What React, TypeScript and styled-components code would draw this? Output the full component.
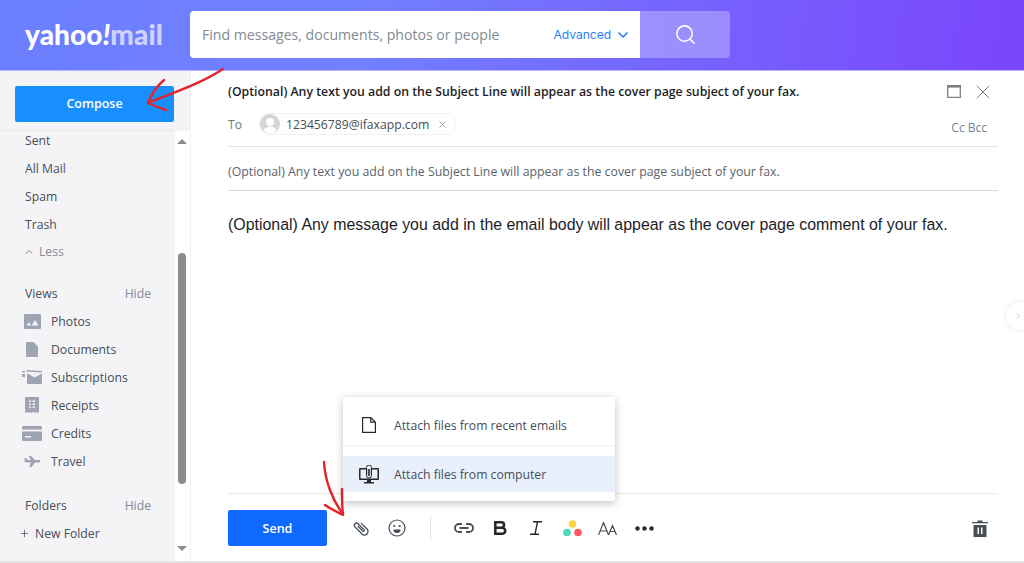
import React from 'react';
import styled, {createGlobalStyle} from 'styled-components';
import {ChevronDown, ChevronUp, Plus, Search, X} from 'lucide-react';

const GlobalStyle = createGlobalStyle`
  html, body {
    margin: 0;
    padding: 0;
    height: 100%;
    overflow: hidden;
    background: #fff;
    font-family: "Open Sans", "Noto Sans", sans-serif;
  }
`;

const StyledPage = styled.div`
  position: relative;
  width: 1024px;
  height: 563px;
  display: flex;
  flex-direction: column;
  overflow: hidden;
`;

const StyledHeader = styled.header`
  height: 71px;
  flex: none;
  display: flex;
  align-items: flex-start;
  padding-top: 11px;
  box-sizing: border-box;
  background: linear-gradient(95deg, #6b7fff 0%, #7280ff 35%, #7a45fb 100%);
  border-bottom: 1px solid #bdb4fb;
`;

const StyledLogo = styled.div`
  width: 190px;
  box-sizing: border-box;
  padding: 8px 0 0 25px;
  font-family: "Lato", sans-serif;
  font-weight: 900;
  font-size: 28px;
  letter-spacing: 0.1px;
  line-height: 30px;
  color: #fff;
  white-space: nowrap;

  span {
    color: #d0d3ff;
  }
`;

const StyledSearch = styled.div`
  width: 450px;
  height: 47px;
  box-sizing: border-box;
  display: flex;
  align-items: center;
  padding: 0 9px 0 12px;
  background: #fff;
  border-radius: 4px 0 0 4px;
`;

const StyledPlaceholder = styled.div`
  flex: 1;
  font-size: 14.1px;
  color: #828a93;
`;

const StyledAdvanced = styled.div`
  display: flex;
  align-items: center;
  gap: 4px;
  font-family: "Inter", sans-serif;
  font-size: 12.2px;
  letter-spacing: -0.1px;
  color: #2f7ffb;
`;

const StyledSearchButton = styled.div`
  width: 90px;
  height: 47px;
  display: flex;
  align-items: center;
  justify-content: center;
  background: rgba(255, 255, 255, 0.28);
  border-radius: 0 4px 4px 0;
  color: #fff;
`;

const StyledBody = styled.div`
  flex: 1;
  min-height: 0;
  display: flex;
  border-bottom: 2px solid #e4e4e7;
`;

const StyledSidebar = styled.aside`
  width: 191px;
  flex: none;
  display: flex;
  flex-direction: column;
  background: #f4f4f7;
  border-right: 1px solid #f0f0f2;
  box-sizing: border-box;
`;

const StyledComposeArea = styled.div`
  height: 59px;
  flex: none;
  box-sizing: border-box;
  padding: 15px 16px 0 15px;
  border-bottom: 1px solid #ececef;
  box-shadow: 0 1px 2px rgba(0, 0, 0, 0.04);
  position: relative;
  z-index: 1;
  background: #f4f4f7;
`;

const StyledCompose = styled.div`
  height: 36px;
  box-sizing: border-box;
  padding-bottom: 2px;
  display: flex;
  align-items: center;
  justify-content: center;
  background: #188fff;
  border-radius: 2px;
  color: #fff;
  font-size: 12.5px;
  font-weight: 600;
`;

const StyledSideScroll = styled.div`
  flex: 1;
  min-height: 0;
  display: flex;
`;

const StyledNav = styled.nav`
  flex: 1;
  margin-top: -4px;
  color: #464e56;
  font-size: 12.2px;
`;

const StyledNavRow = styled.div<{$height?: number; $before?: number; $after?: number; $muted?: boolean}>`
  height: ${p => p.$height ?? 28}px;
  margin-top: ${p => p.$before ?? 0}px;
  margin-bottom: ${p => p.$after ?? 0}px;
  padding: 0 24px 0 25px;
  display: flex;
  align-items: center;
  justify-content: space-between;
  color: ${p => (p.$muted ? '#828a93' : 'inherit')};
`;

const StyledHide = styled.span`
  color: #828a93;
`;

const StyledIconRow = styled.div`
  height: 28px;
  display: flex;
  align-items: center;
  padding-left: 22px;
`;

const StyledNavIcon = styled.span`
  width: 20px;
  margin-right: 9px;
  display: flex;
  justify-content: center;
  color: #9ea4b1;
`;

const StyledLess = styled.span`
  display: flex;
  align-items: center;
  gap: 4px;
  margin-left: -2px;
`;

const StyledNewFolder = styled.div`
  height: 28px;
  display: flex;
  align-items: center;
  gap: 5px;
  padding-left: 19px;
`;

const StyledScrollTrack = styled.div`
  width: 15px;
  flex: none;
  position: relative;
  background: #fff;
`;

const StyledArrow = styled.div<{$down?: boolean}>`
  position: absolute;
  left: 2px;
  ${p => (p.$down ? 'bottom: 10px;' : 'top: 9px;')}
  width: 0;
  height: 0;
  border-left: 5px solid transparent;
  border-right: 5px solid transparent;
  ${p => (p.$down ? 'border-top: 5px solid #8c8c8c;' : 'border-bottom: 5px solid #8c8c8c;')}
`;

const StyledThumb = styled.div`
  position: absolute;
  left: 3px;
  top: 123px;
  width: 8px;
  height: 231px;
  border-radius: 4px;
  background: #8c8c8c;
`;

const StyledMain = styled.main`
  flex: 1;
  min-width: 0;
  display: flex;
  flex-direction: column;
  box-sizing: border-box;
  padding: 0 26px 0 37px;
  color: #26282a;
`;

const StyledTitleRow = styled.div`
  height: 41px;
  flex: none;
  display: flex;
  align-items: center;
  justify-content: space-between;
`;

const StyledTitle = styled.div`
  font-size: 12.3px;
  font-weight: 600;
  color: #1d1d1f;
`;

const StyledWindowIcons = styled.div`
  display: flex;
  align-items: center;
  gap: 10px;
  margin-right: 3px;
  color: #7a8189;
`;

const StyledToRow = styled.div`
  height: 35px;
  flex: none;
  box-sizing: border-box;
  display: flex;
  align-items: center;
  border-bottom: 1px solid #e0e4e9;
  padding-bottom: 10px;
  font-size: 12.2px;
  color: #6e7680;
`;

const StyledToLabel = styled.span`
  width: 31px;
`;

const StyledChip = styled.div`
  height: 22px;
  display: flex;
  align-items: center;
  box-sizing: border-box;
  border: 1px solid #f0f0f3;
  border-radius: 11px;
  padding-right: 7px;
  color: #464e56;
  font-size: 12.2px;
`;

const StyledAvatar = styled.span`
  width: 20px;
  height: 20px;
  margin-right: 6px;
  display: flex;
`;

const StyledChipClose = styled.span`
  margin-left: 8px;
  display: flex;
  color: #979ea8;
`;

const StyledCc = styled.span`
  margin-left: auto;
  margin-right: 11px;
  margin-top: 6px;
  color: #767e87;
  font-size: 12px;
  font-weight: 500;
`;

const StyledSubject = styled.div`
  height: 44px;
  flex: none;
  box-sizing: border-box;
  display: flex;
  align-items: center;
  padding-top: 6px;
  border-bottom: 1px solid #d8dade;
  font-size: 12.33px;
  color: #5b636a;
`;

const StyledMessage = styled.div`
  flex: 1;
  padding-top: 25px;
  font-family: "Liberation Sans", Arial, sans-serif;
  font-size: 15.92px;
  line-height: 18px;
  color: #1d1d1f;
`;

const StyledToolbar = styled.div`
  height: 68px;
  flex: none;
  box-sizing: border-box;
  display: flex;
  align-items: flex-start;
  padding: 16px 0 0 0;
  border-top: 1px solid #e8e9ec;
`;

const StyledSend = styled.div`
  width: 99px;
  height: 36px;
  display: flex;
  align-items: center;
  justify-content: center;
  margin-right: 16px;
  background: #0f69ff;
  border-radius: 2px;
  color: #fff;
  font-size: 12.5px;
  font-weight: 600;
`;

const StyledTool = styled.span`
  width: 36px;
  height: 36px;
  flex: none;
  display: flex;
  align-items: center;
  justify-content: center;
  color: #464e56;
`;

const StyledDivider = styled.span`
  width: 1px;
  height: 24px;
  margin: 6px 15px 0 15px;
  background: #e4e6ea;
`;

const StyledToolEnd = styled(StyledTool)`
  margin-left: auto;
  margin-right: 0;
`;

const StyledPopup = styled.div`
  position: absolute;
  left: 343px;
  top: 397px;
  width: 272px;
  height: 104px;
  background: #fff;
  border-radius: 2px;
  box-shadow: 0 2px 8px rgba(0, 0, 0, 0.25);
`;

const StyledPopupItem = styled.div<{$active?: boolean}>`
  height: ${p => (p.$active ? 36 : 49)}px;
  box-sizing: border-box;
  margin-top: ${p => (p.$active ? 10 : 0)}px;
  padding-top: ${p => (p.$active ? 0 : 8)}px;
  display: flex;
  align-items: center;
  background: ${p => (p.$active ? '#e9f0fb' : '#fff')};
  border-bottom: ${p => (p.$active ? 'none' : '1px solid #eeeff1')};
  font-size: 12.2px;
  color: #464e56;
`;

const StyledPopupIcon = styled.span`
  width: 51px;
  flex: none;
  display: flex;
  justify-content: center;
  color: #26282a;
`;

const StyledEdgeHandle = styled.div`
  position: absolute;
  right: -10px;
  top: 302px;
  width: 28px;
  height: 28px;
  display: flex;
  align-items: center;
  padding-left: 7px;
  box-sizing: border-box;
  border-radius: 50%;
  background: #fff;
  box-shadow: 0 0 5px rgba(0, 0, 0, 0.1);
  color: #c4c6ca;
`;

const StyledAnnotations = styled.svg`
  position: absolute;
  left: 0;
  top: 0;
  z-index: 2;
  pointer-events: none;
`;

const PhotosIcon = () => (
  <svg width="17" height="15" viewBox="0 0 17 15">
    <path fill="currentColor" fillRule="evenodd" d="M1 0h15a1 1 0 0 1 1 1v13a1 1 0 0 1-1 1H1a1 1 0 0 1-1-1V1a1 1 0 0 1 1-1zM2.500 11.500h4.500L5 8zM7.500 11.500h7L11 6z" />
  </svg>
);

const DocumentIcon = () => (
  <svg width="12" height="15" viewBox="0 0 12 15">
    <path fill="currentColor" d="M1 0h6.500L12 4.500V14a1 1 0 0 1-1 1H1a1 1 0 0 1-1-1V1a1 1 0 0 1 1-1z" />
  </svg>
);

const SubscriptionsIcon = () => (
  <svg width="20" height="14" viewBox="0 0 20 14">
    <path fill="currentColor" d="M0 1h3v1.500H0zM4.500 0 20 1v1.500L4.500 1.500zM0 4h3v3H0zM5 3l7.500 4.500L20 3.500V13a1 1 0 0 1-1 1H6a1 1 0 0 1-1-1z" />
  </svg>
);

const ReceiptIcon = () => (
  <svg width="14" height="16" viewBox="0 0 14 16">
    <path fill="currentColor" fillRule="evenodd" d="M1 0h12a1 1 0 0 1 1 1v14l-1.500 1-1.500-1-1.500 1L8 15l-1.500 1L5 15l-1.500 1L2 15l-2 1V1a1 1 0 0 1 1-1zM4 3.500v1.500h2V3.500zM7.500 3.500v1.500h2.500V3.500zM4 6.500V8h2V6.500zM7.500 6.500V8h2.500V6.500zM4 9.500V11h2V9.500zM7.500 9.500V11h2.500V9.500z" />
  </svg>
);

const CreditIcon = () => (
  <svg width="20" height="15" viewBox="0 0 20 15">
    <path fill="currentColor" fillRule="evenodd" d="M1 0h18a1 1 0 0 1 1 1v2.500H0V1a1 1 0 0 1 1-1zM0 5.500h20V14a1 1 0 0 1-1 1H1a1 1 0 0 1-1-1zM3 10v1.500h6V10z" />
  </svg>
);

const PlaneIcon = () => (
  <svg width="17" height="11" viewBox="0 0 17 11">
    <path fill="currentColor" d="M0 2.500 2 2l1.500 2H7L4.500 0H7l4 4h4.500a1.500 1.500 0 0 1 0 2.500H11L7.500 11H5l2-4.500H3L0 5.500l1-1.500z" />
  </svg>
);

const MaximizeIcon = () => (
  <svg width="14" height="13" viewBox="0 0 14 13">
    <path fill="none" stroke="currentColor" strokeWidth="1.300" d="M.7.7h12.600v11.600H.7z" />
    <path fill="currentColor" d="M0 0h14v2.600H0z" />
  </svg>
);

const AvatarIcon = () => (
  <svg width="20" height="20" viewBox="0 0 20 20">
    <circle cx="10" cy="10" r="10" fill="#d4d5d8" />
    <circle cx="10" cy="8" r="4" fill="#fff" />
    <path fill="#fff" d="M3.500 16.500c1-3 4-4 6.500-4s5.500 1 6.500 4A9.800 9.800 0 0 1 10 20a9.800 9.800 0 0 1-6.500-3.500z" />
  </svg>
);

const PageIcon = () => (
  <svg width="14" height="16" viewBox="0 0 14 16">
    <path fill="none" stroke="currentColor" strokeWidth="1.200" d="M.6.6h8.200l4.600 4.600v10.200H.6zM8.800.6v4.600h4.600" />
  </svg>
);

const ComputerClipIcon = () => (
  <svg width="20" height="19" viewBox="0 0 20 19">
    <path fill="currentColor" fillRule="evenodd" d="M1 3h18a1 1 0 0 1 1 1v10a1 1 0 0 1-1 1h-7v2h3v1.500H5V17h3v-2H1a1 1 0 0 1-1-1V4a1 1 0 0 1 1-1zM1.500 4.500v9h17v-9z" />
    <path fill="#e9f0fb" stroke="currentColor" strokeWidth="1" d="M7.500 2.500v8a2.500 2.500 0 0 0 5 0v-8a2.500 2.500 0 0 0-5 0z" />
    <path fill="none" stroke="currentColor" strokeWidth="1" d="M9.300 4v6a.7.7 0 0 0 1.400 0V4" />
  </svg>
);

const ClipIcon = () => (
  <svg width="18" height="18" viewBox="0 0 18 18">
    <path transform="rotate(-45 9 9)" fill="none" stroke="currentColor" strokeWidth="1.300" strokeLinecap="round" d="M12.500 6v8a3.500 3.500 0 0 1-7 0V4a2.200 2.200 0 0 1 4.400 0v8.500a.9.900 0 0 1-1.800 0V6" />
  </svg>
);

const SmileIcon = () => (
  <svg width="18" height="18" viewBox="0 0 18 18">
    <circle cx="9" cy="9" r="8" fill="none" stroke="currentColor" strokeWidth="1.200" />
    <circle cx="6.300" cy="7" r="1.100" fill="currentColor" />
    <circle cx="11.700" cy="7" r="1.100" fill="currentColor" />
    <path fill="currentColor" d="M5.500 10.500h7a3.500 3.500 0 0 1-7 0z" />
  </svg>
);

const LinkIcon = () => (
  <svg width="20" height="10" viewBox="0 0 20 10">
    <path fill="none" stroke="currentColor" strokeWidth="1.800" d="M8 1H5a4 4 0 0 0 0 8h3M12 1h3a4 4 0 0 1 0 8h-3M5.500 5h9" />
  </svg>
);

const BoldIcon = () => (
  <svg width="13" height="14" viewBox="0 0 13 14">
    <path fill="none" stroke="#26282a" strokeWidth="2.600" d="M1.300 1.300h6a2.700 2.700 0 0 1 0 5.500h-6zM1.300 6.800h7a2.950 2.950 0 0 1 0 5.900h-7z" />
  </svg>
);

const ItalicIcon = () => (
  <svg width="13" height="14" viewBox="0 0 13 14">
    <path fill="none" stroke="#26282a" strokeWidth="1.400" d="M3 .8h9M7.500.8 5 13.200M0 13.200h9" />
  </svg>
);

const ColorsIcon = () => (
  <svg width="19" height="17" viewBox="0 0 19 17">
    <circle cx="9.500" cy="4" r="3.800" fill="#ffd23f" />
    <circle cx="4" cy="12.500" r="3.800" fill="#4fd8bb" />
    <circle cx="15" cy="12.500" r="3.800" fill="#ff5a67" />
  </svg>
);

const FontSizeIcon = () => (
  <svg width="20" height="13" viewBox="0 0 20 13">
    <path fill="none" stroke="currentColor" strokeWidth="1.200" d="M.5 13 5.500.5 10.500 13M2 9h7M10.500 13 14.500 3.500 18.500 13 M12 9.500h5" />
  </svg>
);

const DotsIcon = () => (
  <svg width="19" height="5" viewBox="0 0 19 5">
    <circle cx="2.500" cy="2.500" r="2.200" fill="#26282a" />
    <circle cx="9.500" cy="2.500" r="2.200" fill="#26282a" />
    <circle cx="16.500" cy="2.500" r="2.200" fill="#26282a" />
  </svg>
);

const TrashIcon = () => (
  <svg width="16" height="17" viewBox="0 0 16 17">
    <path fill="#464e56" fillRule="evenodd" d="M0 2h5.500V.5h5V2H16v1.300H0zM1.500 5h13v12h-13zM5.500 7.500V14H7V7.500zM9 7.500V14h1.500V7.500z" />
  </svg>
);

const App = () => {
  return (
    <StyledPage>
      <GlobalStyle />
      <StyledHeader>
        <StyledLogo>
          yahoo<i>!</i><span>mail</span>
        </StyledLogo>
        <StyledSearch>
          <StyledPlaceholder>Find messages, documents, photos or people</StyledPlaceholder>
          <StyledAdvanced>
            Advanced
            <ChevronDown size={16} strokeWidth={2.6} />
          </StyledAdvanced>
        </StyledSearch>
        <StyledSearchButton>
          <Search size={23} strokeWidth={1.6} />
        </StyledSearchButton>
      </StyledHeader>

      <StyledBody>
        <StyledSidebar>
          <StyledComposeArea>
            <StyledCompose>Compose</StyledCompose>
          </StyledComposeArea>
          <StyledSideScroll>
            <StyledNav>
              <StyledNavRow>Sent</StyledNavRow>
              <StyledNavRow>All Mail</StyledNavRow>
              <StyledNavRow>Spam</StyledNavRow>
              <StyledNavRow>Trash</StyledNavRow>
              <StyledNavRow $height={27} $after={14} $muted>
                <StyledLess>
                  <ChevronUp size={12} strokeWidth={2} />
                  Less
                </StyledLess>
              </StyledNavRow>
              <StyledNavRow>
                Views
                <StyledHide>Hide</StyledHide>
              </StyledNavRow>
              <StyledIconRow>
                <StyledNavIcon><PhotosIcon /></StyledNavIcon>
                Photos
              </StyledIconRow>
              <StyledIconRow>
                <StyledNavIcon><DocumentIcon /></StyledNavIcon>
                Documents
              </StyledIconRow>
              <StyledIconRow>
                <StyledNavIcon><SubscriptionsIcon /></StyledNavIcon>
                Subscriptions
              </StyledIconRow>
              <StyledIconRow>
                <StyledNavIcon><ReceiptIcon /></StyledNavIcon>
                Receipts
              </StyledIconRow>
              <StyledIconRow>
                <StyledNavIcon><CreditIcon /></StyledNavIcon>
                Credits
              </StyledIconRow>
              <StyledIconRow>
                <StyledNavIcon><PlaneIcon /></StyledNavIcon>
                Travel
              </StyledIconRow>
              <StyledNavRow $before={16}>
                Folders
                <StyledHide>Hide</StyledHide>
              </StyledNavRow>
              <StyledNewFolder>
                <Plus size={11} strokeWidth={1.6} />
                New Folder
              </StyledNewFolder>
            </StyledNav>
            <StyledScrollTrack>
              <StyledArrow />
              <StyledThumb />
              <StyledArrow $down />
            </StyledScrollTrack>
          </StyledSideScroll>
        </StyledSidebar>

        <StyledMain>
          <StyledTitleRow>
            <StyledTitle>(Optional) Any text you add on the Subject Line will appear as the cover page subject of your fax.</StyledTitle>
            <StyledWindowIcons>
              <MaximizeIcon />
              <X size={24} strokeWidth={1} />
            </StyledWindowIcons>
          </StyledTitleRow>
          <StyledToRow>
            <StyledToLabel>To</StyledToLabel>
            <StyledChip>
              <StyledAvatar><AvatarIcon /></StyledAvatar>
              123456789@ifaxapp.com
              <StyledChipClose><X size={11} strokeWidth={2} /></StyledChipClose>
            </StyledChip>
            <StyledCc>Cc Bcc</StyledCc>
          </StyledToRow>
          <StyledSubject>(Optional) Any text you add on the Subject Line will appear as the cover page subject of your fax.</StyledSubject>
          <StyledMessage>(Optional) Any message you add in the email body will appear as the cover page comment of your fax.</StyledMessage>
          <StyledToolbar>
            <StyledSend>Send</StyledSend>
            <StyledTool><ClipIcon /></StyledTool>
            <StyledTool><SmileIcon /></StyledTool>
            <StyledDivider />
            <StyledTool><LinkIcon /></StyledTool>
            <StyledTool><BoldIcon /></StyledTool>
            <StyledTool><ItalicIcon /></StyledTool>
            <StyledTool><ColorsIcon /></StyledTool>
            <StyledTool><FontSizeIcon /></StyledTool>
            <StyledTool><DotsIcon /></StyledTool>
            <StyledToolEnd><TrashIcon /></StyledToolEnd>
          </StyledToolbar>
        </StyledMain>
      </StyledBody>

      <StyledPopup>
        <StyledPopupItem>
          <StyledPopupIcon><PageIcon /></StyledPopupIcon>
          Attach files from recent emails
        </StyledPopupItem>
        <StyledPopupItem $active>
          <StyledPopupIcon><ComputerClipIcon /></StyledPopupIcon>
          Attach files from computer
        </StyledPopupItem>
      </StyledPopup>

      <StyledEdgeHandle>
        <ChevronDown size={10} strokeWidth={2} style={{transform: 'rotate(-90deg)'}} />
      </StyledEdgeHandle>

      <StyledAnnotations width="1024" height="563" viewBox="0 0 1024 563">
        <g fill="none" stroke="#e3242b" strokeWidth="2.400" strokeLinecap="round" strokeLinejoin="round">
          <path d="M223 69C200 84 175 92 150 102" />
          <path d="M164 80C157 86 151 95 148 103C154 106 160 108 166 110" />
          <path d="M324 462C325 480 332 500 343 514" />
          <path d="M325 505C331 509 337 512 343 515C342 506 342 498 342 489" />
        </g>
      </StyledAnnotations>
    </StyledPage>
  );
};

export default App;
